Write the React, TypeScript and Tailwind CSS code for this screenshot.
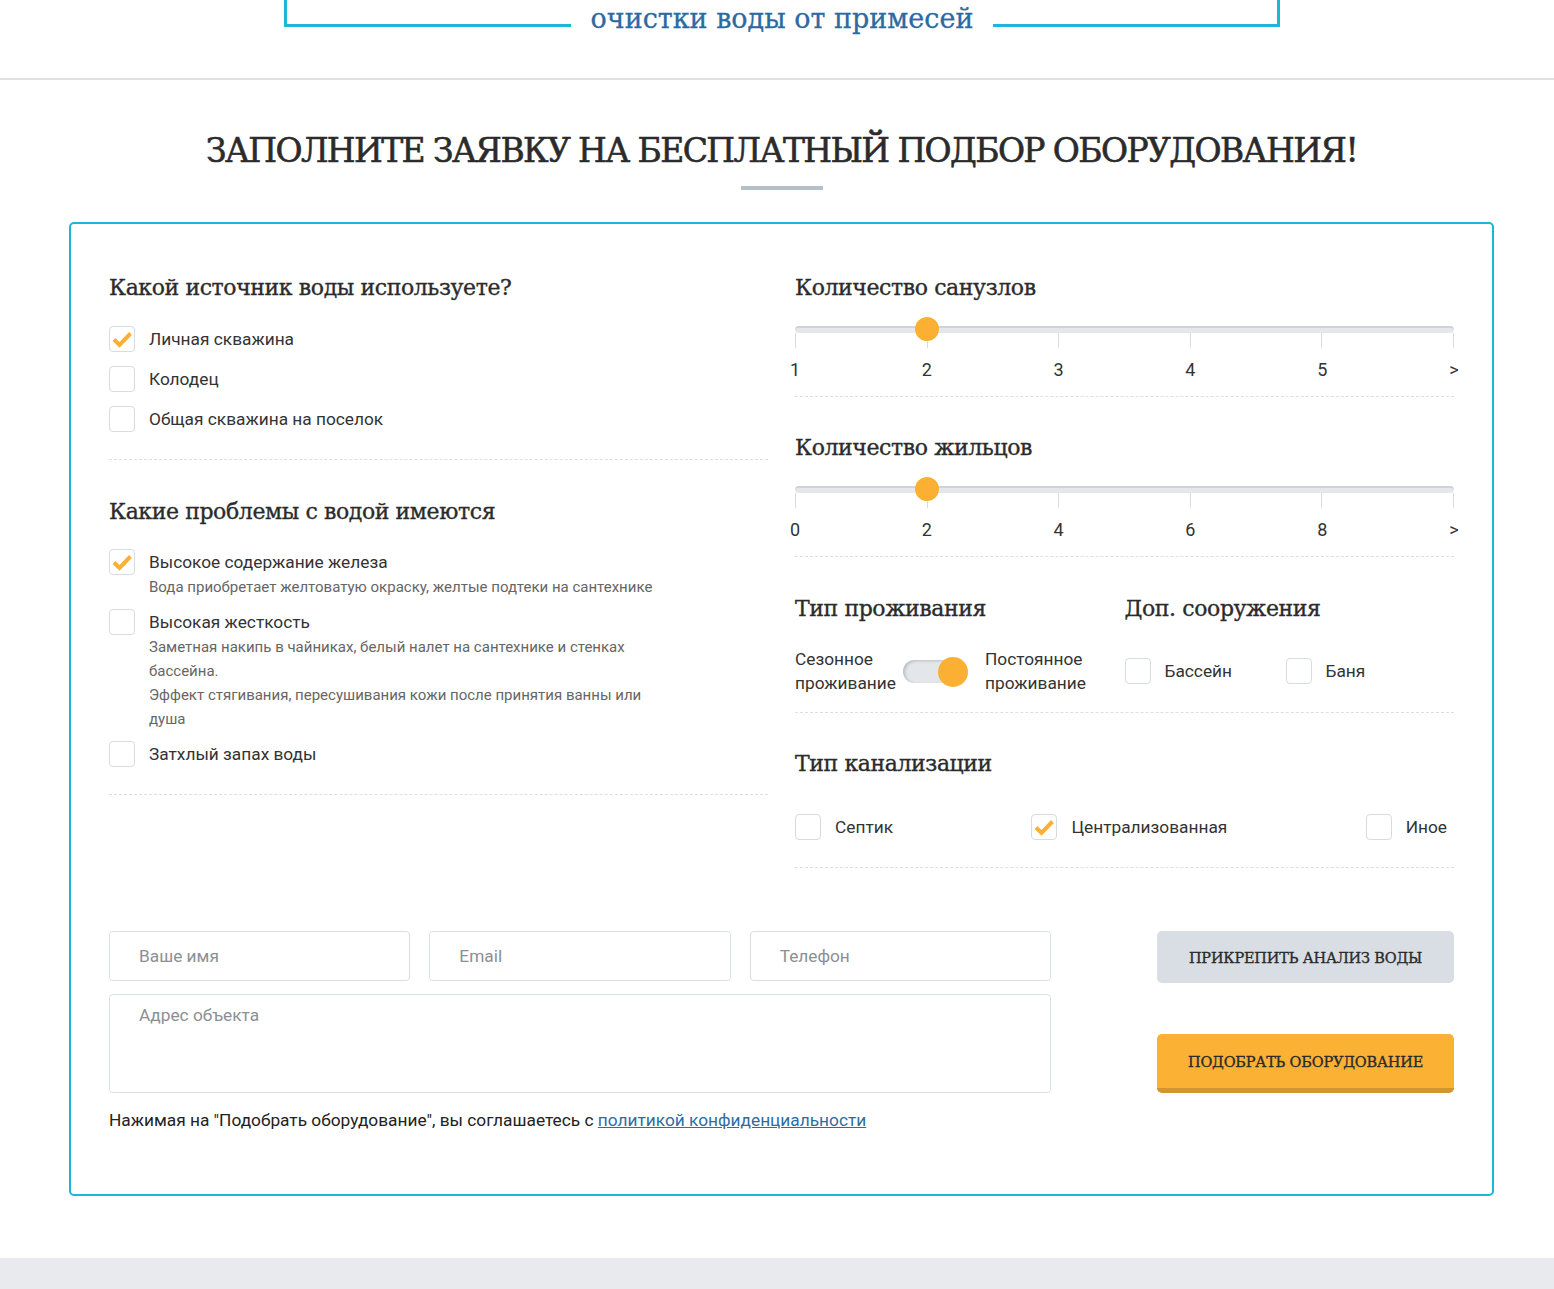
import React from "react";

const serif = "font-['DejaVu_Serif',serif]";
const sans = "font-['Roboto',sans-serif]";

function Box({ checked = false }: { checked?: boolean }) {
  return (
    <span className="flex h-[26px] w-[26px] shrink-0 items-center justify-center rounded-[4px] border border-[#d6dce1] bg-white">
      {checked && (
        <svg width="22" height="22" viewBox="0 0 22 22" fill="none">
          <path d="M3 11.5 L8.5 17 L19.5 5.5" stroke="#fbb034" strokeWidth="4" strokeLinejoin="miter" />
        </svg>
      )}
    </span>
  );
}

function Check({ label, checked = false }: { label: string; checked?: boolean }) {
  return (
    <label className="flex h-[26px] items-center gap-[14px]">
      <Box checked={checked} />
      <span className="text-[17.3px] leading-[26px] text-[#333]">{label}</span>
    </label>
  );
}

function Problem({ label, checked = false, desc }: { label: string; checked?: boolean; desc: string[] }) {
  return (
    <div className="flex gap-[14px]">
      <Box checked={checked} />
      <div>
        <div className="text-[17.3px] leading-[26px] text-[#333]">{label}</div>
        {desc.map((d) => (
          <div key={d} className="text-[15px] leading-[24px] text-[#666]">{d}</div>
        ))}
      </div>
    </div>
  );
}

function Heading({ children }: { children: React.ReactNode }) {
  return (
    <h3 className={`${serif} h-8 text-[22px] leading-8 tracking-[-0.4px] text-[#2b2b2b] [-webkit-text-stroke:0.35px_#2b2b2b]`}>
      {children}
    </h3>
  );
}

function Dashed({ className = "" }: { className?: string }) {
  return <div className={`border-t border-dashed border-[#dcdfe3] ${className}`} />;
}

function Slider({ labels, value }: { labels: string[]; value: number }) {
  const step = 100 / (labels.length - 1);
  return (
    <div className="relative mt-[22px]">
      <div className="h-[7px] rounded-full border-t-2 border-[#cfd3d7] bg-[#e5e8eb]" />
      <div
        className="absolute top-[-9px] h-[24px] w-[24px] -translate-x-1/2 rounded-full bg-[#fbb034]"
        style={{ left: `${value * step}%` }}
      />
      <div className="flex h-[15px] justify-between">
        {labels.map((l) => (
          <span key={l} className="w-px bg-[#d8dcdf]" />
        ))}
      </div>
      <div className="mt-[10px] flex justify-between">
        {labels.map((l) => (
          <span key={l} className="flex w-0 justify-center text-[18px] leading-[24px] text-[#333]">{l}</span>
        ))}
      </div>
    </div>
  );
}

export default function App() {
  return (
    <div className={`${sans} min-h-[1289px] bg-white text-[#333]`}>
      {/* top strip */}
      <div className="h-[80px] overflow-hidden border-b-2 border-[#dde0e4]">
        <div className="relative ml-[284px] h-[27px] w-[996px] border-x-[3px] border-b-[3px] border-[#1db6d6]">
          <div className={`${serif} absolute top-[-35px] left-0 right-0 text-center text-[27px] leading-[36px] text-[#2c6aa0] [-webkit-text-stroke:0.3px_#2c6aa0]`}>
            <div>Системы и оборудование для</div>
            <span className="inline-block bg-white px-[20px]">очистки воды от примесей</span>
          </div>
        </div>
      </div>

      <h2 className={`${serif} mt-[51px] ml-[9px] text-center text-[33px] leading-[40px] tracking-[-1.6px] text-[#2b2b2b] [-webkit-text-stroke:0.6px_#2b2b2b]`}>
        ЗАПОЛНИТЕ ЗАЯВКУ НА БЕСПЛАТНЫЙ ПОДБОР ОБОРУДОВАНИЯ!
      </h2>
      <div className="mt-[15px] ml-[741px] h-[4px] w-[82px] bg-[#b5c1ca]" />

      <div className="mt-[32px] ml-[69px] w-[1425px] rounded-[5px] border-2 border-[#1db6d6] px-[38px] pt-[48px] pb-[62px]">
        <div className="grid grid-cols-2 gap-[27px]">
          {/* left */}
          <div>
            <Heading>Какой источник воды используете?</Heading>
            <div className="mt-[22px] flex flex-col gap-[14px]">
              <Check label="Личная скважина" checked />
              <Check label="Колодец" />
              <Check label="Общая скважина на поселок" />
            </div>
            <Dashed className="mt-[27px]" />
            <div className="mt-[36px]">
              <Heading>Какие проблемы с водой имеются</Heading>
            </div>
            <div className="mt-[21px] flex flex-col gap-[10px]">
              <Problem
                label="Высокое содержание железа"
                checked
                desc={["Вода приобретает желтоватую окраску, желтые подтеки на сантехнике"]}
              />
              <Problem
                label="Высокая жесткость"
                desc={[
                  "Заметная накипь в чайниках, белый налет на сантехнике и стенках",
                  "бассейна.",
                  "Эффект стягивания, пересушивания кожи после принятия ванны или",
                  "душа",
                ]}
              />
              <Problem label="Затхлый запах воды" desc={[]} />
            </div>
            <Dashed className="mt-[27px]" />
          </div>

          {/* right */}
          <div>
            <Heading>Количество санузлов</Heading>
            <Slider labels={["1", "2", "3", "4", "5", ">"]} value={1} />
            <Dashed className="mt-[14px]" />
            <div className="mt-[35px]">
              <Heading>Количество жильцов</Heading>
            </div>
            <Slider labels={["0", "2", "4", "6", "8", ">"]} value={1} />
            <Dashed className="mt-[14px]" />

            <div className="mt-[36px] grid grid-cols-2">
              <div>
                <Heading>Тип проживания</Heading>
                <div className="mt-[22px] flex items-center text-[17.3px] leading-[24px] text-[#333]">
                  <div>Сезонное<br />проживание</div>
                  <div className="relative ml-[7px] h-[23px] w-[64px] rounded-full bg-[#e4e7ea] shadow-[inset_2px_1px_3px_rgba(0,0,0,0.18)]">
                    <span className="absolute top-[-3px] right-[-1px] h-[30px] w-[30px] rounded-full bg-[#fbb034]" />
                  </div>
                  <div className="ml-[18px]">Постоянное<br />проживание</div>
                </div>
              </div>
              <div>
                <Heading>Доп. сооружения</Heading>
                <div className="mt-[22px] flex h-[48px] items-center">
                  <div className="w-[161px]">
                    <Check label="Бассейн" />
                  </div>
                  <Check label="Баня" />
                </div>
              </div>
            </div>
            <Dashed className="mt-[17px]" />

            <div className="mt-[35px]">
              <Heading>Тип канализации</Heading>
            </div>
            <div className="mt-[34px] flex justify-between pr-[7px]">
              <Check label="Септик" />
              <Check label="Централизованная" checked />
              <Check label="Иное" />
            </div>
            <Dashed className="mt-[27px]" />
          </div>
        </div>

        {/* contacts */}
        <div className="mt-[63px] flex justify-between">
          <div className="w-[942px]">
            <div className="grid grid-cols-3 gap-[19px]">
              {["Ваше имя", "Email", "Телефон"].map((p) => (
                <input
                  key={p}
                  placeholder={p}
                  className="h-[50px] rounded-[4px] border border-[#dadfe3] px-[29px] text-[17.3px] text-[#333] outline-none placeholder:text-[#8c9095]"
                />
              ))}
            </div>
            <textarea
              placeholder="Адрес объекта"
              className="mt-[13px] block h-[99px] w-full resize-none rounded-[4px] border border-[#dadfe3] px-[29px] pt-[8px] text-[17.3px] leading-[24px] outline-none placeholder:text-[#8c9095]"
            />
            <p className="mt-[15px] text-[17.3px] leading-[24px] text-[#222]">
              Нажимая на "Подобрать оборудование", вы соглашаетесь с{" "}
              <a href="#" className="text-[#2e6da4] underline">политикой конфиденциальности</a>
            </p>
          </div>
          <div className="flex w-[297px] flex-col">
            <button className={`${serif} h-[52px] rounded-[5px] bg-[#d9dee4] pt-[4px] text-[14.5px] tracking-[-0.2px] text-[#2b2b2b] [-webkit-text-stroke:0.35px_#2b2b2b]`}>
              ПРИКРЕПИТЬ АНАЛИЗ ВОДЫ
            </button>
            <button className={`${serif} mt-[51px] h-[59px] rounded-[5px] border-b-[5px] border-[#d1962e] bg-[#fbb134] pt-[4px] text-[14.5px] tracking-[-0.2px] text-[#2b2b2b] [-webkit-text-stroke:0.35px_#2b2b2b]`}>
              ПОДОБРАТЬ ОБОРУДОВАНИЕ
            </button>
          </div>
        </div>
      </div>

      <div className="mt-[62px] h-[31px] bg-[#e8eaed]" />
    </div>
  );
}
